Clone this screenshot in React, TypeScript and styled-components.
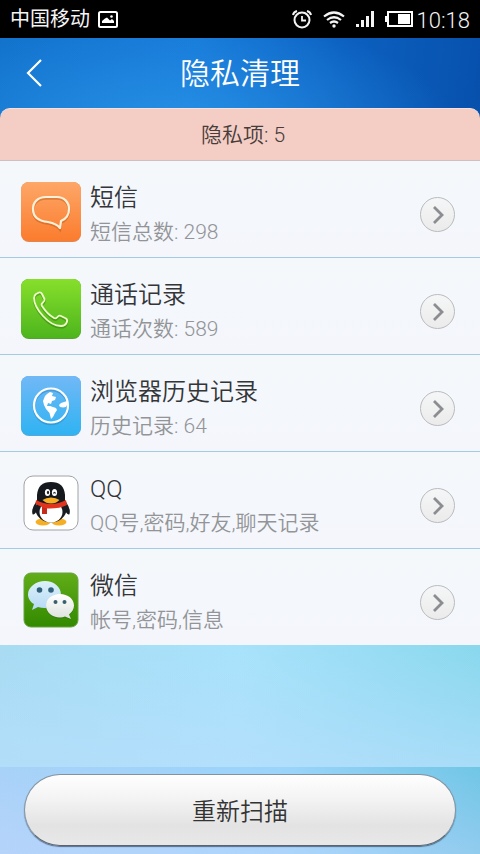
import React from "react";
import styled, { createGlobalStyle } from "styled-components";

const GlobalStyle = createGlobalStyle`
  * { box-sizing: border-box; }
  html, body, #root { min-height: 100vh; }
  body {
    margin: 0;
    background: #b1e1fb;
    font-family: Roboto, "Noto Sans CJK SC", sans-serif;
    font-weight: 350;
  }
  button { font-family: inherit; cursor: pointer; }
`;

const Screen = styled.div`
  min-height: 100vh;
  display: flex;
  flex-direction: column;
  background: #b1e1fb;
`;

const StatusBar = styled.div`
  height: 38px;
  padding: 0 10px;
  display: flex;
  align-items: center;
  justify-content: space-between;
  background: #000;
  color: #f4f4f4;
`;

const StatusGroup = styled.div<{ $gap: number }>`
  display: flex;
  align-items: center;
  gap: ${(p) => p.$gap}px;
  svg { display: block; }
`;

const Carrier = styled.span`
  font-size: 20px;
  line-height: 38px;
  font-weight: 400;
`;

const Clock = styled.span`
  padding-top: 4px;
  font-size: 22px;
  line-height: 34px;
`;

const Top = styled.div`
  background:
    radial-gradient(ellipse 60% 100% at 36% 80%, rgba(42, 150, 232, 0.85), rgba(42, 150, 232, 0) 100%),
    linear-gradient(97deg, #1272cc 0%, #1678d8 40%, #0c60c0 70%, #0750ac 100%);
`;

const Header = styled.header`
  height: 70px;
  display: grid;
  grid-template-columns: 68px 1fr 68px;
  align-items: center;
`;

const Back = styled.button`
  height: 70px;
  padding: 0;
  border: 0;
  background: none;
  display: flex;
  align-items: center;
  justify-content: center;
`;

const Title = styled.h1`
  margin: 0;
  padding-top: 2px;
  color: #fff;
  font-size: 30px;
  line-height: 44px;
  font-weight: 350;
  text-align: center;
`;

const Summary = styled.div`
  height: 53px;
  border-top: 1px solid #f9dfdb;
  border-bottom: 1px solid #cdbfc3;
  border-radius: 10px 10px 0 0;
  background: #f4cdc5;
  color: #473c3a;
  font-size: 21px;
  line-height: 52px;
  padding-left: 6px;
  text-align: center;
`;

const List = styled.ul`
  margin: 0;
  padding: 0;
  list-style: none;
  background: #f4f6fa;
`;

const Item = styled.li`
  height: 97px;
  padding: 11px 25px 0 21px;
  display: grid;
  grid-template-columns: 60px 1fr 35px;
  align-items: center;
  column-gap: 9px;
  border-bottom: 1px solid #a4cbe2;
  background: linear-gradient(#f4f8fb, #f4f6fb);
  &:last-child { height: 96px; border-bottom: 0; }
`;

const AppIcon = styled.div`
  padding-bottom: 6px;
  display: flex;
  justify-content: center;
  svg { display: block; }
`;

const Name = styled.div`
  color: #333539;
  font-size: 24px;
  line-height: 34px;
`;

const Detail = styled.div`
  color: #929497;
  font-size: 21px;
  line-height: 34px;
`;

const Texts = styled.div`
  min-width: 0;
  padding-top: 1px;
  white-space: nowrap;
`;

const Go = styled.button`
  width: 35px;
  height: 35px;
  padding: 0;
  border: 1px solid #babbbd;
  border-radius: 50%;
  background: linear-gradient(#f5f6f7, #ebebeb);
  display: flex;
  align-items: center;
  justify-content: center;
`;

const Sky = styled.div`
  flex: 1;
  background:
    linear-gradient(rgba(185, 222, 253, 0), rgba(185, 222, 253, 0.65)),
    linear-gradient(90deg, #a8dcf3 0%, #a8e2fb 50%, #89d8ed 100%);
`;

const Footer = styled.footer`
  height: 87px;
  padding: 7px 24px 0;
  background:
    linear-gradient(rgba(208, 214, 255, 0), rgba(208, 214, 255, 0.35)),
    linear-gradient(90deg, #a8d2f8 0%, #9ad4fa 60%, #70c6e6 100%);
`;

const Rescan = styled.button`
  display: block;
  width: 100%;
  height: 72px;
  padding: 4px 0 0;
  border: 1px solid #83929f;
  border-bottom-color: #5b646e;
  border-radius: 36px;
  background: linear-gradient(#ffffff 0%, #f3f3f3 35%, #e3e3e3 72%, #e8e8e8 100%);
  background-origin: border-box;
  box-shadow: 0 1px 1px rgba(30, 45, 70, 0.6);
  color: #333;
  font-size: 24px;
  line-height: 36px;
  font-weight: 350;
`;

function TileBase({ id, from, to, edge, children }: {
  id: string; from: string; to: string; edge: string; children: React.ReactNode;
}) {
  return (
    <svg width="60" height="60" viewBox="0 0 60 60" aria-hidden="true">
      <defs>
        <linearGradient id={id} x1="0" y1="0" x2="0" y2="1">
          <stop offset="0" stopColor={from} />
          <stop offset="1" stopColor={to} />
        </linearGradient>
      </defs>
      <rect width="60" height="60" rx="8" fill={edge} />
      <rect width="60" height="59" rx="8" fill={`url(#${id})`} />
      {children}
    </svg>
  );
}

const bubble = "M25 15H36C43 15 48 20 48 27C48 33 45 37 40 39L39 46C36 42 32 41 27 40C17 39 12 34 12 27C12 20 17 15 25 15Z";
function SmsIcon() {
  return (
    <TileBase id="sms" from="#fda768" to="#fb7c2d" edge="#df8552">
      <path d={bubble} transform="translate(0 1.500)" fill="none" stroke="#b95619" strokeOpacity=".45" strokeWidth="2.500" />
      <path d={bubble} fill="none" stroke="#fff0d8" strokeWidth="2.200" strokeLinejoin="round" />
    </TileBase>
  );
}

const handset = "M15 15L18 13.500Q20 13 21 15L23.500 20Q24 22 21.500 24Q20 25 21 27Q26 35 33 39Q35 40 36.500 38Q38 36 40 37L45 39.500Q47 41 45.500 44Q44 47 40 47Q31 47 22 37Q13 27 13 19Q13 16.500 15 15Z";
function PhoneIcon() {
  return (
    <TileBase id="phone" from="#87df2b" to="#4db51d" edge="#55a528">
      <path d={handset} transform="translate(0 1.500)" fill="none" stroke="#276c08" strokeOpacity=".4" strokeWidth="2.200" />
      <path d={handset} fill="none" stroke="#efffc9" strokeWidth="1.800" strokeLinejoin="round" />
    </TileBase>
  );
}

function GlobeIcon() {
  return (
    <TileBase id="globe" from="#72b8f6" to="#2fb3f2" edge="#5aa6d8">
      <circle cx="30" cy="31" r="17" fill="none" stroke="#2479b4" strokeOpacity=".4" strokeWidth="2.500" />
      <circle cx="30" cy="29.500" r="17" fill="none" stroke="#fff" strokeWidth="2.200" />
      <path d="M26 18L29 16L32 17L31 20L35 21L34 24L31 25L30 28L27 27L26 30L29 30L35 32L36 34L34 37L32 41L30 43L28.500 37L25 33L23 29L22 25L24 20Z" fill="#fff" />
      <path d="M38 29L40 27L43 26L46 25L47 27L45 31L42 31.500L39 31Z" fill="#fff" />
    </TileBase>
  );
}

function QQIcon() {
  return (
    <svg width="56" height="56" viewBox="0 0 56 56" aria-hidden="true">
      <rect x="1" y="1" width="54" height="54" rx="9" fill="#fff" stroke="#a1a2a6" />
      <ellipse cx="20" cy="47" rx="7.500" ry="3.500" fill="#f6ae24" />
      <ellipse cx="36" cy="47" rx="7.500" ry="3.500" fill="#f6ae24" />
      <path d="M13 27Q8 34 9.500 39Q10.500 41 14 36ZM43 27Q48 34 46.500 39Q45.500 41 42 36Z" fill="#181c20" />
      <ellipse cx="28" cy="34" rx="15.500" ry="13.500" fill="#181c20" />
      <ellipse cx="28" cy="37" rx="11.500" ry="10.500" fill="#fff" />
      <path d="M14 26V20Q15 7 28 7Q41 7 42 20V26Q37 31 28 31Q19 31 14 26Z" fill="#15191d" />
      <ellipse cx="24.500" cy="17.500" rx="2.600" ry="3.600" fill="#fff" />
      <ellipse cx="31.500" cy="17.500" rx="2.600" ry="3.600" fill="#fff" />
      <ellipse cx="25" cy="17.500" rx="1.100" ry="1.800" fill="#222" />
      <path d="M30.500 18.500Q31.500 16 32.500 18.500" fill="none" stroke="#222" strokeWidth="1.200" />
      <path d="M13 25Q28 33 43 25L44 30Q36 34 24 33.500V39L19 39V32L12.500 29Z" fill="#e0341f" />
      <path d="M19 32L24 33.500V39H19Z" fill="#c62b1c" />
      <path d="M19.500 25Q23 22.500 28 22.500Q33 22.500 36.500 25Q33 28.500 28 28.500Q23 28.500 19.500 25Z" fill="#f8af26" />
    </svg>
  );
}

function WeChatIcon() {
  return (
    <svg width="56" height="56" viewBox="0 0 56 56" aria-hidden="true">
      <defs>
        <linearGradient id="wechat" x1="0" y1="0" x2="0" y2="1">
          <stop offset="0" stopColor="#62ad18" />
          <stop offset="1" stopColor="#328900" />
        </linearGradient>
        <linearGradient id="wechatBlue" x1="0" y1="0" x2="0" y2="1">
          <stop offset="0" stopColor="#dcf1f9" />
          <stop offset="1" stopColor="#b5d9f5" />
        </linearGradient>
        <linearGradient id="wechatWhite" x1="0" y1="0" x2="0" y2="1">
          <stop offset="0" stopColor="#fff" />
          <stop offset="1" stopColor="#dce2dc" />
        </linearGradient>
      </defs>
      <rect x="1" y="1" width="54" height="54" rx="7" fill="url(#wechat)" stroke="#68a344" />
      <path d="M22 9C31 9 38 15 38 22.500C38 30 31 36 22 36Q18 36 15 35L9 38L11 32C7 30 5 26 5 22.500C5 15 13 9 22 9Z" fill="url(#wechatBlue)" />
      <circle cx="16.500" cy="18" r="2.800" fill="#32617c" />
      <circle cx="28" cy="18" r="2.800" fill="#32617c" />
      <path d="M37 22C45 22 51 27 51 33.500C51 37 49 40 46 42.500L48 47L42 44.500Q40 45.500 37 45.500C29 45.500 23 40 23 33.500C23 27 29 22 37 22Z" transform="translate(0 1)" fill="#286611" opacity=".45" />
      <path d="M37 22C45 22 51 27 51 33.500C51 37 49 40 46 42.500L48 47L42 44.500Q40 45.500 37 45.500C29 45.500 23 40 23 33.500C23 27 29 22 37 22Z" fill="url(#wechatWhite)" />
      <circle cx="32.500" cy="30" r="2" fill="#37606f" />
      <circle cx="41.500" cy="30" r="2" fill="#37606f" />
    </svg>
  );
}

function PictureIcon() {
  return (
    <svg width="20" height="17" viewBox="0 0 20 17" aria-hidden="true">
      <rect x="1" y="1" width="18" height="15" rx="1.500" fill="none" stroke="#fff" strokeWidth="2" />
      <path d="M4 12V10L7 7.500L9 6.500L12 9.500L14 8L16 10V12Z" fill="#fff" />
      <circle cx="13.500" cy="5.500" r="1.300" fill="#fff" />
    </svg>
  );
}

function AlarmIcon() {
  return (
    <svg width="20" height="19" viewBox="0 0 20 19" fill="none" stroke="#f4f4f4" aria-hidden="true">
      <circle cx="10" cy="10" r="7.500" strokeWidth="2" />
      <path d="M10 6V10.500H14" strokeWidth="1.800" />
      <path d="M1 5Q1.500 2 5 1M19 5Q18.500 2 15 1" strokeWidth="2" />
    </svg>
  );
}

function WifiIcon() {
  return (
    <svg width="22" height="17" viewBox="0 0 22 17" fill="none" stroke="#f4f4f4" strokeWidth="2.200" aria-hidden="true">
      <path d="M1 5.500Q11 -2.500 21 5.500M4 9Q11 3.500 18 9M7 12Q11 9 15 12" />
      <circle cx="11" cy="15" r="1.700" fill="#f4f4f4" stroke="none" />
    </svg>
  );
}

function SignalIcon() {
  return (
    <svg width="18" height="16" viewBox="0 0 18 16" fill="#f4f4f4" aria-hidden="true">
      <rect x="0" y="13" width="3" height="3" />
      <rect x="5" y="9" width="3" height="7" />
      <rect x="10" y="5" width="3" height="11" />
      <rect x="15" y="0" width="3" height="16" />
    </svg>
  );
}

function BatteryIcon() {
  return (
    <svg width="28" height="16" viewBox="0 0 28 16" aria-hidden="true">
      <rect x="3" y="1" width="24" height="14" fill="none" stroke="#fff" strokeWidth="2" />
      <rect x="0" y="5" width="3" height="6" fill="#fff" />
      <rect x="13" y="3" width="12" height="10" fill="#fff" />
    </svg>
  );
}

const rows = [
  { name: "短信", detail: "短信总数: 298", icon: <SmsIcon /> },
  { name: "通话记录", detail: "通话次数: 589", icon: <PhoneIcon /> },
  { name: "浏览器历史记录", detail: "历史记录: 64", icon: <GlobeIcon /> },
  { name: "QQ", detail: "QQ号,密码,好友,聊天记录", icon: <QQIcon /> },
  { name: "微信", detail: "帐号,密码,信息", icon: <WeChatIcon /> },
];

export default function App() {
  return (
    <>
      <GlobalStyle />
      <Screen lang="zh-CN">
        <StatusBar>
          <StatusGroup $gap={8}>
            <Carrier>中国移动</Carrier>
            <PictureIcon />
          </StatusGroup>
          <StatusGroup $gap={11}>
            <AlarmIcon />
            <WifiIcon />
            <SignalIcon />
            <StatusGroup $gap={4}>
              <BatteryIcon />
              <Clock>10:18</Clock>
            </StatusGroup>
          </StatusGroup>
        </StatusBar>
        <Top>
          <Header>
            <Back aria-label="返回">
              <svg width="16" height="28" viewBox="0 0 16 28" fill="none" stroke="#fff" strokeWidth="2.200" aria-hidden="true">
                <path d="M15 1L2 14L15 27" />
              </svg>
            </Back>
            <Title>隐私清理</Title>
          </Header>
          <Summary>隐私项: 5</Summary>
        </Top>
        <List>
          {rows.map((row) => (
            <Item key={row.name}>
              <AppIcon>{row.icon}</AppIcon>
              <Texts>
                <Name>{row.name}</Name>
                <Detail>{row.detail}</Detail>
              </Texts>
              <Go aria-label={row.name}>
                <svg width="12" height="18" viewBox="0 0 12 18" fill="none" stroke="#8c8d90" strokeWidth="2.800" aria-hidden="true">
                  <path d="M2 1L10 9L2 17" />
                </svg>
              </Go>
            </Item>
          ))}
        </List>
        <Sky />
        <Footer>
          <Rescan>重新扫描</Rescan>
        </Footer>
      </Screen>
    </>
  );
}
